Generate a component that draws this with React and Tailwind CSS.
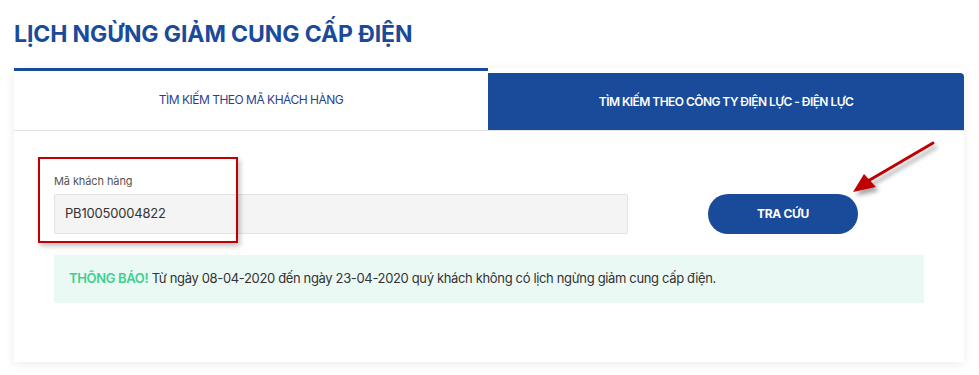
export default function App() {
  return (
    <div className="w-[979px] h-[375px] bg-white overflow-hidden font-['Inter',sans-serif]">
      <h1 className="pl-[14px] pt-[20px] h-[68px] text-[23px] font-bold leading-[28px] text-[#1a4a9a] tracking-[-0.1px]">
        LỊCH NGỪNG GIẢM CUNG CẤP ĐIỆN
      </h1>

      <div className="relative ml-[14px] w-[950px] h-[294px] bg-white shadow-[0_2px_10px_rgba(0,0,0,0.08)]">
        {/* Tabs */}
        <div className="flex h-[63px] border-b border-[#e2e2e2]">
          <div className="w-[474px] border-t-[3px] border-[#1a4a9a] flex items-center justify-center pb-[2px]">
            <span className="text-[12px] text-[#2d3f8c] tracking-[-0.5px]">TÌM KIẾM THEO MÃ KHÁCH HÀNG</span>
          </div>
          <div className="flex-1 mt-[5px] bg-[#1a4a9a] rounded-tr-[4px] flex items-center justify-center">
            <span className="text-[12px] font-semibold text-white tracking-[-0.55px]">TÌM KIẾM THEO CÔNG TY ĐIỆN LỰC - ĐIỆN LỰC</span>
          </div>
        </div>

        {/* Form */}
        <div className="flex items-end pl-[40px] pt-[43px]">
          <div className="flex flex-col">
            <label className="text-[11px] text-[#555] leading-[14px] mb-[6px] tracking-[-0.1px]">Mã khách hàng</label>
            <div className="w-[574px] h-[40px] bg-[#f4f4f4] border border-[#e3e3e3] rounded-[2px] flex items-center px-[10px]">
              <span className="text-[13px] text-[#333] tracking-[-0.2px]">PB10050004822</span>
            </div>
          </div>
          <button className="ml-[80px] w-[150px] h-[40px] rounded-full bg-[#1a4a9a] text-white text-[12px] font-bold tracking-[-0.3px]">
            TRA CỨU
          </button>
        </div>

        <div className="ml-[40px] mt-[21px] w-[870px] h-[48px] bg-[#ebf9f5] flex items-center pl-[15px]">
          <p className="text-[13px] text-[#333] tracking-[-0.35px]">
            <span className="font-semibold text-[#3ecf8e]">THÔNG BÁO!</span> Từ ngày 08-04-2020 đến ngày 23-04-2020 quý khách không có lịch ngừng giảm cung cấp điện.
          </p>
        </div>

        {/* Red highlight box */}
        <div className="absolute left-[24px] top-[89px] w-[200px] h-[86px] border-2 border-[#c00000] shadow-[2px_3px_5px_rgba(0,0,0,0.25)]" />
      </div>

      {/* Arrow annotation */}
      <svg className="absolute left-[840px] top-[135px]" width="110" height="70" viewBox="0 0 110 70">
        <defs>
          <filter id="sh" x="-20%" y="-20%" width="150%" height="150%">
            <feDropShadow dx="3" dy="4" stdDeviation="2" floodColor="#000" floodOpacity="0.35" />
          </filter>
        </defs>
        <g filter="url(#sh)">
          <line x1="93" y1="8" x2="28" y2="46" stroke="#c00000" strokeWidth="3" strokeLinecap="round" />
          <polygon points="13,57 24,39 36,52" fill="#c00000" />
        </g>
      </svg>
    </div>
  );
}
